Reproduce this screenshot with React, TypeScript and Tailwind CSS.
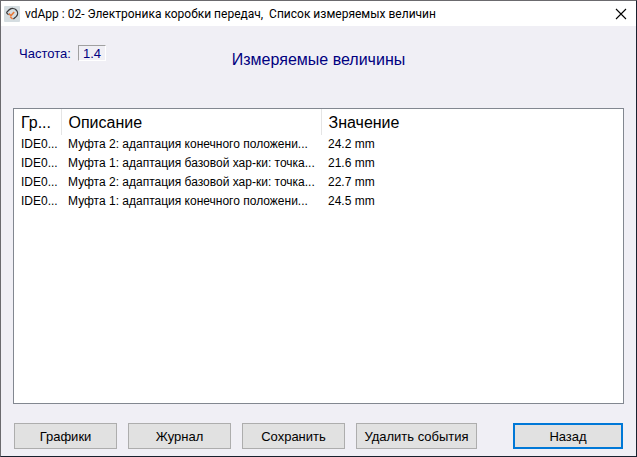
const rows = [
  { group: 'IDE0...', description: 'Муфта 2: адаптация конечного положени...', value: '24.2 mm' },
  { group: 'IDE0...', description: 'Муфта 1: адаптация базовой хар-ки: точка...', value: '21.6 mm' },
  { group: 'IDE0...', description: 'Муфта 2: адаптация базовой хар-ки: точка...', value: '22.7 mm' },
  { group: 'IDE0...', description: 'Муфта 1: адаптация конечного положени...', value: '24.5 mm' }
]

const actions = [
  { label: 'Графики', width: 'w-[103px]' },
  { label: 'Журнал', width: 'w-[103px]' },
  { label: 'Сохранить', width: 'w-[103px]' },
  { label: 'Удалить события', width: 'w-[121px]' }
]

function AppIcon() {
  return (
    <svg viewBox="0 0 16 16" className="h-4 w-4 shrink-0" fill="none" aria-hidden="true">
      <rect width="16" height="16" rx="1" fill="#d5dde1" />
      <path d="M2.4 6.6 L5.4 3.6 C7.6 2 10.6 2.2 12.2 4 C14 5.8 14 8.6 12.4 10.4 L9.4 13" stroke="#3a3a3c" strokeWidth="1.3" />
      <path d="M2.4 6.6 L4.6 8.8" stroke="#3a3a3c" strokeWidth="1.2" />
      <path d="M4.8 7.6 L7 9.6 L10.2 6" stroke="#e8793a" strokeWidth="1.6" />
      <path d="M6.2 10.8 L8.6 13" stroke="#e8793a" strokeWidth="1.4" />
    </svg>
  )
}

function TitleBar() {
  return (
    <header className="flex h-[25px] items-center bg-white pl-[3px] pr-[9px]">
      <AppIcon />
      <h1 className="ml-[5px] flex-1 whitespace-pre font-[Roboto,'Noto_Sans',sans-serif] text-[12px] leading-4 text-black">
        {'vdApp : 02- Электроника коробки передач,  Список измеряемых величин'}
      </h1>
      <button type="button" aria-label="Закрыть" className="flex h-3 w-3 items-center justify-center">
        <svg viewBox="0 0 12 12" className="h-3 w-3" stroke="#000" strokeWidth="1.1">
          <path d="M1 1 L11 11 M11 1 L1 11" />
        </svg>
      </button>
    </header>
  )
}

function ValuesTable() {
  return (
    <div className="flex-1 border border-[#828790] bg-white">
      <table className="w-full table-fixed border-collapse text-left text-black">
        <colgroup>
          <col className="w-[47px]" />
          <col className="w-[260px]" />
          <col />
        </colgroup>
        <thead>
          <tr className="h-[26px] text-[16px] leading-5">
            <th className="border-r border-[#e5e5e5] p-0 pl-[7px] pt-px font-normal">Гр...</th>
            <th className="border-r border-[#e5e5e5] p-0 pl-[7px] pt-px font-normal">Описание</th>
            <th className="p-0 pl-[7px] pt-px font-normal">Значение</th>
          </tr>
        </thead>
        <tbody className="text-[12px] leading-[19px]">
          {rows.map((row) => (
            <tr key={row.description}>
              <td className="whitespace-nowrap p-0 pl-[7px]">{row.group}</td>
              <td className="whitespace-nowrap p-0 pl-[7px]">{row.description}</td>
              <td className="whitespace-nowrap p-0 pl-[7px]">{row.value}</td>
            </tr>
          ))}
        </tbody>
      </table>
    </div>
  )
}

export default function App() {
  return (
    <div className="flex min-h-screen flex-col border border-b-[#18202e] border-l-[#6b6a6e] border-r-[#18202e] border-t-[#6b6a6e] bg-[#f0eff5] font-['Liberation_Sans',Arial,sans-serif]">
      <TitleBar />
      <main className="flex flex-1 flex-col px-3 pb-[7px]">
        <div className="grid h-[82px] grid-cols-[1fr_auto_1fr] items-start pt-[18px] text-[#000080]">
          <div className="flex items-center pl-[6px] text-[13px] leading-4">
            <label htmlFor="rate" className="w-[59px] pt-0.5">
              Частота:
            </label>
            <input
              id="rate"
              readOnly
              defaultValue="1.4"
              className="h-4 w-7 border border-b-white border-l-[#a0a0a0] border-r-white border-t-[#a0a0a0] bg-transparent pt-0.5 text-center outline-none"
            />
          </div>
          <h2 className="pt-[6px] text-[16px] leading-5">Измеряемые величины</h2>
        </div>
        <ValuesTable />
        <footer className="mt-[19px] flex items-center gap-[11px] pl-px pr-px text-[13px] leading-4 text-black">
          {actions.map((action) => (
            <button
              key={action.label}
              type="button"
              className={`h-[26px] whitespace-nowrap border border-[#adadad] bg-[#e1e1e1] pt-px ${action.width}`}
            >
              {action.label}
            </button>
          ))}
          <button type="button" className="ml-auto h-[26px] w-[110px] border-2 border-[#0078d7] bg-[#e1e1e1] pt-px">
            Назад
          </button>
        </footer>
      </main>
    </div>
  )
}
